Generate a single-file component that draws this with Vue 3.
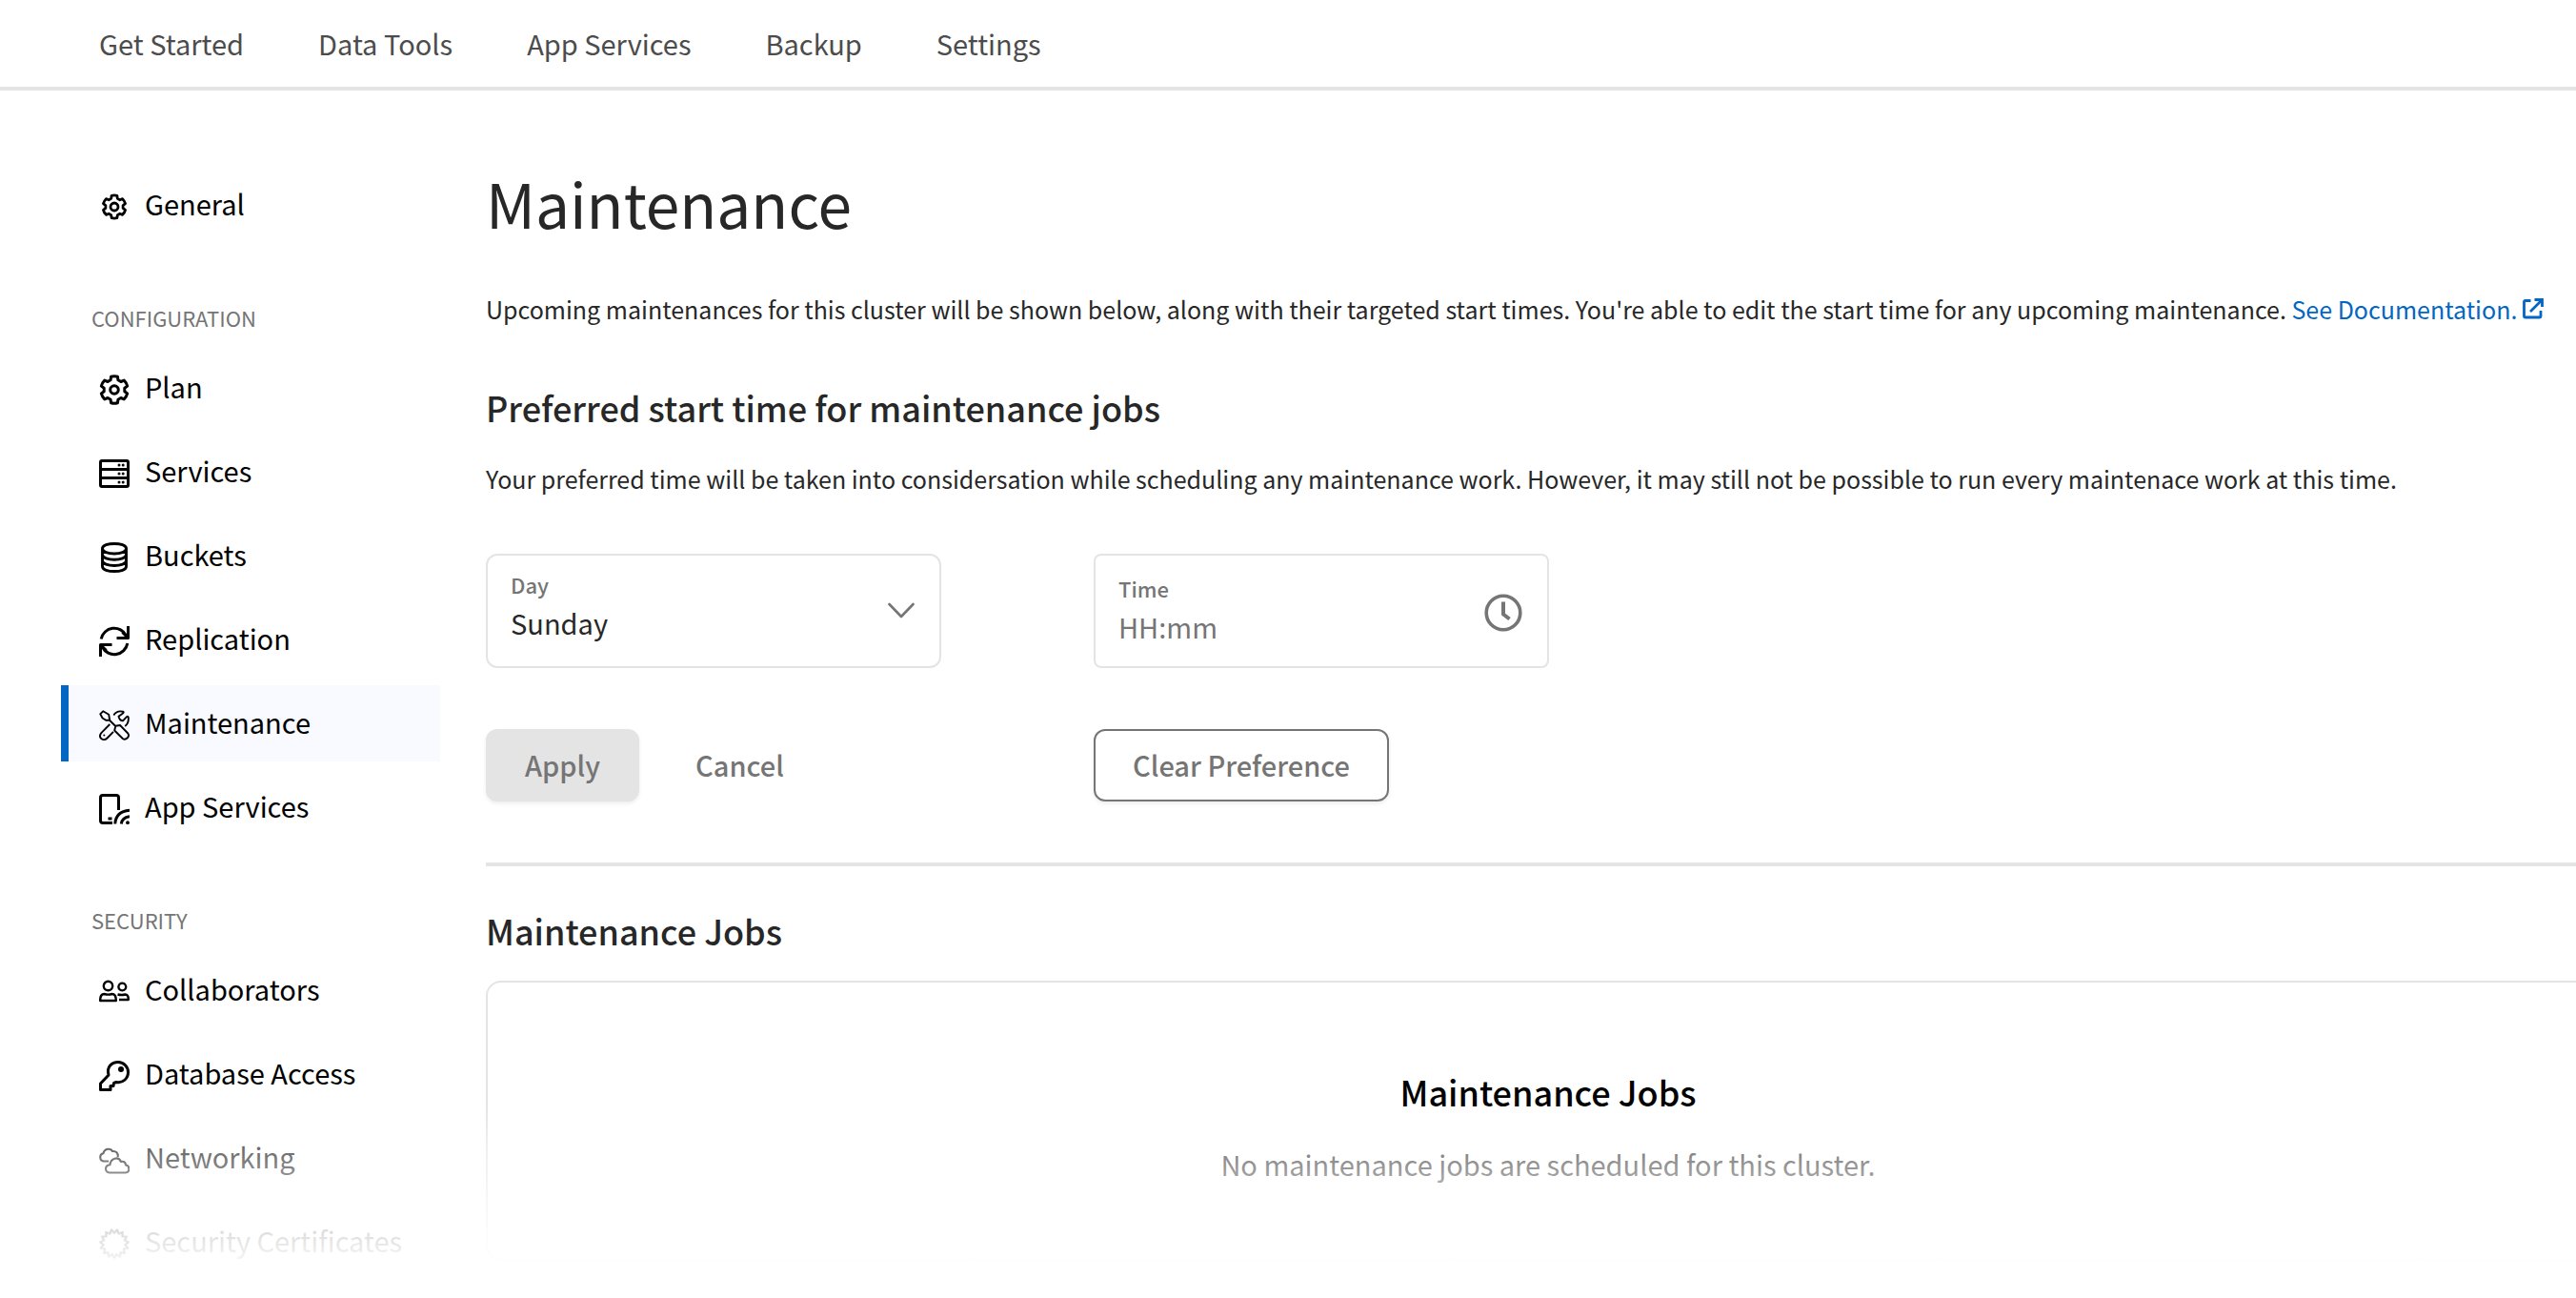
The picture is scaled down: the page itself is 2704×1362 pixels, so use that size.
<script setup>
import { ref } from 'vue'

const day = ref('Sunday')
const time = ref('')
const days = ['Sunday', 'Monday', 'Tuesday', 'Wednesday', 'Thursday', 'Friday', 'Saturday']

const tabs = ['Get Started', 'Data Tools', 'App Services', 'Backup', 'Settings']

const point = (r, deg) => {
  const a = (deg * Math.PI) / 180
  return `${(16 + r * Math.cos(a)).toFixed(2)} ${(16 + r * Math.sin(a)).toFixed(2)}`
}

// Six-toothed cog outline
const cog = (outer) => {
  const inner = outer * 0.77
  let d = ''
  for (let k = 0; k < 6; k++) {
    const a = -90 + k * 60
    d += `${k ? 'L' : 'M'}${point(inner, a - 21)}L${point(outer, a - 14)}Q${point(outer * 1.04, a)} ${point(outer, a + 14)}L${point(inner, a + 21)}`
  }
  return d + 'Z'
}

// Jagged seal outline
const seal = () => {
  const pts = []
  for (let k = 0; k < 30; k++) pts.push(point(k % 2 ? 14.8 : 11.4, -90 + k * 12))
  return `M${pts.join('L')}Z`
}

const icons = {
  cogSmall: { w: 2.8, d: cog(12) + 'M20 16a4 4 0 1 1-8 0a4 4 0 1 1 8 0Z' },
  cog: { w: 3, d: cog(14.2) + 'M20.3 16a4.3 4.3 0 1 1-8.6 0a4.3 4.3 0 1 1 8.6 0Z' },
  servers: {
    w: 3,
    d: 'M3 2.5H29Q30.5 2.5 30.5 4V28Q30.5 29.5 29 29.5H3Q1.5 29.5 1.5 28V4Q1.5 2.5 3 2.5ZM1.5 11.5H30.5M1.5 20.5H30.5',
    dots: [[21, 7], [25.2, 7], [21, 16], [25.2, 16], [21, 25], [25.2, 25]],
    r: 1.5
  },
  database: {
    w: 2.9,
    d: 'M3.5 6.5C3.5 -0.2 28.5 -0.2 28.5 6.5V25.5C28.5 32.2 3.5 32.2 3.5 25.5ZM3.5 6.5C3.5 13.8 28.5 13.8 28.5 6.5M3.5 12.8C3.5 20.1 28.5 20.1 28.5 12.8M3.5 19C3.5 26.3 28.5 26.3 28.5 19'
  },
  sync: {
    w: 3,
    d: 'M2.2 13.5A14 14 0 0 1 28.5 10M30.5 0V12.5H18.5M29.8 18A14 14 0 0 1 3.5 22M1.5 32V19.5H13.5M24.5 6.5L30 12M7.5 25.5L2 20'
  },
  tools: {
    w: 1.9,
    d: 'M1.3 4.2L4.2 1.3L10.2 4.8L11.2 10.7L7.2 10.8L3.6 8.5ZM11 10.8L17.8 17.5M17.3 16.8L22 16L30.3 24.5Q32 27 29.8 29.3Q27.2 31.8 24.8 30L16.2 21.5ZM15.3 5.5Q18.5 0.2 25 1.7Q26.8 2.3 24 4.2L20.5 6.8Q21.5 11.2 25 11.4L29 7.2Q30.5 6 30.8 8Q31.3 14 27.2 17M11.3 15L2.5 23.8Q-0.5 27.5 2.3 30Q5.5 32.5 8.5 29.5L15 22.8',
    dots: [[5.3, 26.5]],
    r: 1
  },
  device: {
    w: 3,
    d: 'M14 30.5H4Q1.5 30.5 1.5 28V4Q1.5 1.5 4 1.5H18Q20.5 1.5 20.5 4V17M9.5 26H13.5M16.8 31.5Q17.5 18.5 32 17.3M23.3 31.5Q24 25 32 23.8',
    dots: [[30, 30.2]],
    r: 1.9
  },
  people: {
    w: 2.4,
    d: 'M14.2 7.5a4.7 4.7 0 1 1-9.4 0a4.7 4.7 0 1 1 9.4 0ZM28.2 8.5a3.9 3.9 0 1 1-7.8 0a3.9 3.9 0 1 1 7.8 0ZM5.5 16Q9.5 17.3 13.5 16Q18 16 17.8 23H1.2Q1 16 5.5 16ZM19.5 16.5Q24 17.5 27.5 16.5Q31 17 30.8 22H21',
    dy: 2
  },
  key: {
    w: 3,
    d: 'M1.5 30.5V24L10 15C7.5 6.5 13.5 1.5 20 1.5C26 1.5 30.5 6.5 30.5 12C30.5 18.5 25 24 18 22.5L15.5 23.5L15 26.5H12V30.5Z',
    dots: [[23, 9]],
    r: 3
  },
  clouds: {
    w: 2.1,
    d: 'M10 17.5H5.5C0 17.5 0 10 4.5 9.2C5.5 4 12.5 3.5 14 7C18 6.5 20 9 19.8 13M11.5 29.5C5.5 29.5 5.5 21.8 11.5 21.3C12 14 20.5 12 23 18C26.5 17 28 19.5 28 21.5C32.5 22 32.5 29.5 27.5 29.5Z'
  },
  seal: { w: 2.4, d: seal() }
}

const groups = [
  { title: '', items: [{ label: 'General', icon: 'cogSmall' }] },
  {
    title: 'CONFIGURATION',
    items: [
      { label: 'Plan', icon: 'cog' },
      { label: 'Services', icon: 'servers' },
      { label: 'Buckets', icon: 'database' },
      { label: 'Replication', icon: 'sync' },
      { label: 'Maintenance', icon: 'tools', active: true },
      { label: 'App Services', icon: 'device' }
    ]
  },
  {
    title: 'SECURITY',
    items: [
      { label: 'Collaborators', icon: 'people' },
      { label: 'Database Access', icon: 'key' },
      { label: 'Networking', icon: 'clouds' },
      { label: 'Security Certificates', icon: 'seal' }
    ]
  }
]
</script>

<template>
  <div class="page">
    <header class="topbar">
      <nav class="tabs" aria-label="Cluster">
        <a v-for="tab in tabs" :key="tab" href="#" class="tab">{{ tab }}</a>
      </nav>
    </header>

    <div class="body">
      <nav class="sidebar" aria-label="Settings">
        <section v-for="group in groups" :key="group.title" class="group">
          <h2 v-if="group.title" class="group-title">{{ group.title }}</h2>
          <a
            v-for="item in group.items"
            :key="item.label"
            href="#"
            class="item"
            :class="{ active: item.active }"
            :aria-current="item.active ? 'page' : undefined"
          >
            <svg class="item-icon" viewBox="0 0 32 32" aria-hidden="true">
              <path
                :d="icons[item.icon].d"
                :transform="`translate(0 ${icons[item.icon].dy || 0})`"
                :stroke-width="icons[item.icon].w"
                fill="none"
                stroke="currentColor"
                stroke-linejoin="round"
              />
              <circle
                v-for="(dot, i) in icons[item.icon].dots || []"
                :key="i"
                :cx="dot[0]"
                :cy="dot[1]"
                :r="icons[item.icon].r"
                fill="currentColor"
              />
            </svg>
            <span class="item-label">{{ item.label }}</span>
          </a>
        </section>
      </nav>

      <main class="content">
        <h1 class="title">Maintenance</h1>
        <p class="text intro">
          Upcoming maintenances for this cluster will be shown below, along with their targeted start times. You're able to edit the start time for any upcoming maintenance.
          <a href="#" class="doc-link">See Documentation.<svg class="external" viewBox="0 0 22 22" aria-hidden="true">
            <path d="M8.5 2.5H3Q1.5 2.500 1.5 4V18.5Q1.5 20 3 20H17.500Q19 20 19 18.500V13M8 14L20 2M12.500 1.500H20.500V9" fill="none" stroke="currentColor" stroke-width="2.8" />
          </svg></a>
        </p>

        <h2 class="heading">Preferred start time for maintenance jobs</h2>
        <p class="text note">
          Your preferred time will be taken into considersation while scheduling any maintenance work. However, it may still not be possible to run every maintenace work at this time.
        </p>

        <form class="form" @submit.prevent>
          <div class="field day">
            <div class="field-main">
              <label for="day" class="field-label">Day</label>
              <select id="day" v-model="day" class="control">
                <option v-for="d in days" :key="d">{{ d }}</option>
              </select>
            </div>
            <svg class="chevron" viewBox="0 0 28 18" aria-hidden="true">
              <path d="M1.5 2L14 15L26.5 2" fill="none" stroke="currentColor" stroke-width="2.6" stroke-linecap="round" stroke-linejoin="round" />
            </svg>
          </div>
          <div class="field time">
            <div class="field-main">
              <label for="time" class="field-label">Time</label>
              <input id="time" v-model="time" type="text" class="control" placeholder="HH:mm" />
            </div>
            <svg class="clock" viewBox="0 0 40 40" aria-hidden="true">
              <circle cx="20" cy="20" r="17.8" fill="none" stroke="currentColor" stroke-width="3.6" />
              <path d="M20 8.5V21.5L26.5 26.5" fill="none" stroke="currentColor" stroke-width="4" stroke-linejoin="round" />
            </svg>
          </div>
          <div class="actions">
            <button type="submit" class="btn apply">Apply</button>
            <button type="button" class="btn cancel">Cancel</button>
          </div>
          <div class="actions">
            <button type="button" class="btn clear">Clear Preference</button>
          </div>
        </form>

        <hr class="divider" />

        <h2 class="heading jobs-heading">Maintenance Jobs</h2>
        <section class="card">
          <h3 class="card-title">Maintenance Jobs</h3>
          <p class="card-text">No maintenance jobs are scheduled for this cluster.</p>
        </section>
      </main>
    </div>
    <div class="fade"></div>
  </div>
</template>

<style>
body {
  margin: 0;
  background: #fff;
}
</style>

<style scoped>
.page {
  position: relative;
  min-height: 100vh;
  overflow: hidden;
  font-family: "Noto Sans CJK SC", "Noto Sans", sans-serif;
  font-size: 29px;
  line-height: 40px;
  color: #272727;
}

h1,
h2,
h3,
p {
  margin: 0;
}

a {
  text-decoration: none;
}

.topbar {
  border-bottom: 4px solid #e4e4e4;
}

.tabs {
  display: flex;
  gap: 78px;
  padding: 25px 104px 26px;
}

.tab {
  color: #4c4c4c;
}

.body {
  display: flex;
  gap: 48px;
  padding: 80px 0 0 64px;
}

.sidebar {
  flex: 0 0 398px;
}

.group {
  display: flex;
  flex-direction: column;
  gap: 8px;
}

.group-title {
  margin: 62px 0 9px 32px;
  font-size: 22px;
  line-height: 33px;
  font-weight: 400;
  color: #757575;
}

.item {
  display: flex;
  align-items: center;
  gap: 16px;
  height: 80px;
  box-sizing: border-box;
  border-left: 8px solid transparent;
  padding: 4px 0 0 32px;
  color: #000;
}

.item.active {
  border-left-color: #0266c2;
  background: #f8faff;
}

.item-icon {
  width: 32px;
  height: 32px;
}

.item-label {
  padding-bottom: 8px;
}

.content {
  flex: 1;
  min-width: 0;
}

.title {
  font-size: 64px;
  line-height: 74px;
  font-weight: 400;
}

.text {
  font-size: 25px;
  line-height: 40px;
  white-space: nowrap;
}

.intro {
  margin-top: 55px;
}

.doc-link {
  color: #0266c2;
}

.external {
  width: 22px;
  height: 22px;
  margin-left: 6px;
}

.heading {
  margin-top: 59px;
  font-size: 36px;
  line-height: 48px;
  font-weight: 500;
}

.note {
  margin-top: 31px;
}

.form {
  display: grid;
  grid-template-columns: 478px 478px;
  column-gap: 160px;
  row-gap: 64px;
  margin-top: 59px;
}

.field {
  display: flex;
  align-items: center;
  justify-content: space-between;
  height: 120px;
  box-sizing: border-box;
  border: 2px solid #e4e4e4;
  border-radius: 12px;
  padding: 0 26px 0 24px;
  color: #757575;
}

.time {
  border-radius: 8px;
  padding-top: 4px;
}

.field-main {
  flex: 1;
  display: flex;
  flex-direction: column;
  padding-bottom: 8px;
}

.day .field-main {
  padding-bottom: 12px;
}

.field-label {
  font-size: 22px;
  line-height: 36px;
  font-weight: 500;
}

.control {
  appearance: none;
  width: 100%;
  height: 44px;
  margin: 0;
  border: 0;
  padding: 0;
  background: transparent;
  font: inherit;
  color: #272727;
  outline: none;
}

.control::placeholder {
  color: #757575;
  opacity: 1;
}

.chevron {
  width: 28px;
  height: 18px;
}

.clock {
  width: 40px;
  height: 40px;
}

.actions {
  display: flex;
  gap: 18px;
}

.btn {
  height: 76px;
  border: 2px solid transparent;
  border-radius: 12px;
  padding: 0 39px 2px;
  background: transparent;
  font: inherit;
  font-weight: 500;
  color: #757575;
}

.apply {
  border-color: #e4e4e4;
  background: #e4e4e4;
  box-shadow: 0 2px 4px rgba(0, 0, 0, 0.08);
}

.clear {
  border-color: #757575;
  box-shadow: 0 2px 4px rgba(0, 0, 0, 0.08);
}

.divider {
  height: 4px;
  margin: 64px 0 0;
  border: 0;
  background: #e4e4e4;
}

.jobs-heading {
  margin-top: 43px;
}

.card {
  margin: 29px -36px 0 0;
  border: 2px solid #e4e4e4;
  border-radius: 16px;
  padding: 90px 0 80px;
  text-align: center;
}

.card-title {
  font-size: 36px;
  line-height: 48px;
  font-weight: 500;
  color: #000;
}

.card-text {
  margin-top: 32px;
  color: #272727;
}

.fade {
  position: absolute;
  right: 0;
  bottom: 0;
  left: 0;
  height: 200px;
  background: linear-gradient(rgba(255, 255, 255, 0), rgba(255, 255, 255, 0.4) 40px, rgba(255, 255, 255, 0.87) 130px, #fff 175px);
  pointer-events: none;
}
</style>
